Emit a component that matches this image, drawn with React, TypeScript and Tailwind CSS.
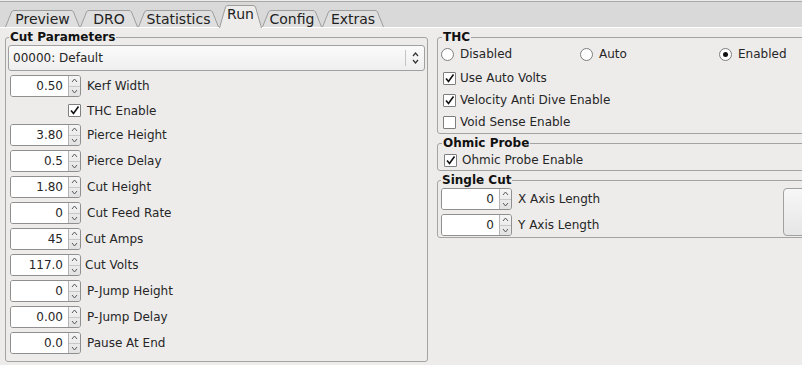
import clsx from "clsx";

// tab strip: bottom widths in px, each tab abuts the next at its bottom corner
const tabs = [
  { label: "Preview", w: 75, cls: "w-[75px]" },
  { label: "DRO", w: 58, cls: "w-[58px]" },
  { label: "Statistics", w: 81, cls: "w-[81px]" },
  { label: "Run", w: 43, cls: "w-[43px]", active: true },
  { label: "Config", w: 60, cls: "w-[60px]" },
  { label: "Extras", w: 62, cls: "w-[62px]" },
];

const cutParams = [
  { value: "3.80", label: "Pierce Height" },
  { value: "0.5", label: "Pierce Delay" },
  { value: "1.80", label: "Cut Height" },
  { value: "0", label: "Cut Feed Rate" },
  { value: "45", label: "Cut Amps", tight: true },
  { value: "117.0", label: "Cut Volts", tight: true },
  { value: "0", label: "P-Jump Height" },
  { value: "0.00", label: "P-Jump Delay" },
  { value: "0.0", label: "Pause At End" },
];

function Tab({ label, w, cls, active }: { label: string; w: number; cls: string; active?: boolean }) {
  const h = active ? 23 : 17;
  const d = `M0.5 ${h} L6.5 2 Q7.3 0.5 9 0.5 L${w - 9} 0.5 Q${w - 7.3} 0.5 ${w - 6.5} 2 L${w - 0.5} ${h}`;
  return (
    <div
      className={clsx(
        "relative flex justify-center",
        cls,
        active ? "h-[23px] -mb-px z-10 pt-[1px]" : "h-[17px] items-center pt-[1px]"
      )}
    >
      <svg className="absolute inset-0" width={w} height={h}>
        <path d={d} fill={active ? "#edeceb" : "#dfdfdf"} stroke="#9d9d9d" strokeWidth="1" />
      </svg>
      <span className="relative text-[14px] leading-[17px] text-[#222]">{label}</span>
    </div>
  );
}

function Spin({ value }: { value: string }) {
  return (
    <div className="flex h-[22px] w-[71px] shrink-0 rounded-[3px] border border-[#8f8f8f] overflow-hidden">
      <div className="flex-1 bg-white text-right pr-[5px] leading-[20px]">{value}</div>
      <div className="flex w-[12px] flex-col border-l border-[#b4b4b4] bg-gradient-to-b from-[#f5f5f5] to-[#e2e2e2]">
        <div className="flex flex-1 items-center justify-center border-b border-[#c8c8c8]">
          <svg width="7" height="5">
            <path d="M1 4 L3.5 1 L6 4" fill="none" stroke="#5a5a5a" strokeWidth="1" />
          </svg>
        </div>
        <div className="flex flex-1 items-center justify-center">
          <svg width="7" height="5">
            <path d="M1 1 L3.5 4 L6 1" fill="none" stroke="#5a5a5a" strokeWidth="1" />
          </svg>
        </div>
      </div>
    </div>
  );
}

function Check({ checked }: { checked?: boolean }) {
  return (
    <div className="flex h-[13px] w-[13px] shrink-0 items-center justify-center rounded-[1px] border border-[#7e7e7e] bg-white">
      {checked && (
        <svg width="11" height="11">
          <path d="M2 5.5 L4.5 8.5 L9.5 1.5" fill="none" stroke="#111" strokeWidth="1.6" />
        </svg>
      )}
    </div>
  );
}

function Radio({ checked }: { checked?: boolean }) {
  return (
    <div className="flex h-[13px] w-[13px] shrink-0 items-center justify-center rounded-full border border-[#7e7e7e] bg-white">
      {checked && <div className="h-[5px] w-[5px] rounded-full bg-[#111]" />}
    </div>
  );
}

function Frame({ title, className, children }: { title: string; className?: string; children: React.ReactNode }) {
  return (
    <fieldset className={clsx("rounded-[3px] border border-[#a3a3a3] px-[2px]", className)}>
      <legend className="ml-[1px] px-[1px] text-[12px] font-bold leading-[14px] text-[#111]">{title}</legend>
      {children}
    </fieldset>
  );
}

export default function App() {
  return (
    <div className="h-[365px] w-[802px] overflow-hidden bg-[#edeceb] font-['DejaVu_Sans',sans-serif] text-[12px] text-[#262626]">
      {/* notebook tabs */}
      <div className="mt-px flex h-[27px] items-end border-t border-b border-t-[#a9a9a9] border-b-white bg-[#d9d9d9] pl-[5px]">
        {tabs.map((t) => (
          <Tab key={t.label} {...t} />
        ))}
      </div>

      <div className="flex items-start gap-[9px] pl-[5px] pt-[2px]">
        {/* cut parameters */}
        <Frame title="Cut Parameters" className="h-[332px] w-[423px] shrink-0 pt-[1px]">
          <div className="flex h-[26px] items-center rounded-[3px] border border-[#a0a0a0] bg-gradient-to-b from-[#fbfbfb] to-[#efefef]">
            <span className="flex-1 pl-[4px]">00000: Default</span>
            <div className="h-[16px] w-px bg-[#c4c4c4]" />
            <div className="flex w-[18px] flex-col items-center gap-[2px]">
              <svg width="7" height="5">
                <path d="M1 4 L3.5 1 L6 4" fill="none" stroke="#333" strokeWidth="1.2" />
              </svg>
              <svg width="7" height="5">
                <path d="M1 1 L3.5 4 L6 1" fill="none" stroke="#333" strokeWidth="1.2" />
              </svg>
            </div>
          </div>
          <div className="mt-[4px] flex flex-col gap-[4px] pl-[2px]">
            <div className="flex items-center">
              <Spin value="0.50" />
              <span className="ml-[6px]">Kerf Width</span>
            </div>
            <div className="flex h-[19px] items-center">
              <div className="flex w-[71px] justify-end">
                <Check checked />
              </div>
              <span className="ml-[6px]">THC Enable</span>
            </div>
            {cutParams.map((p) => (
              <div key={p.label} className="flex items-center">
                <Spin value={p.value} />
                <span className={p.tight ? "ml-[4px]" : "ml-[6px]"}>{p.label}</span>
              </div>
            ))}
          </div>
        </Frame>

        <div className="flex w-[430px] shrink-0 flex-col">
          <Frame title="THC" className="pl-[3px]">
            <div className="grid h-[20px] w-[417px] grid-cols-3 items-center">
              <div className="flex items-center gap-[6px]">
                <Radio />
                <span>Disabled</span>
              </div>
              <div className="flex items-center gap-[6px]">
                <Radio />
                <span>Auto</span>
              </div>
              <div className="flex items-center gap-[6px]">
                <Radio checked />
                <span>Enabled</span>
              </div>
            </div>
            <div className="mt-[3px] flex flex-col pl-[2px]">
              {[
                ["Use Auto Volts", true],
                ["Velocity Anti Dive Enable", true],
                ["Void Sense Enable", false],
              ].map(([label, on]) => (
                <div key={label as string} className="flex h-[22px] items-center gap-[4px]">
                  <Check checked={on as boolean} />
                  <span>{label}</span>
                </div>
              ))}
            </div>
          </Frame>

          <Frame title="Ohmic Probe" className="mt-[2px] pl-[3px]">
            <div className="flex h-[20px] items-center gap-[5px] pl-[3px]">
              <Check checked />
              <span>Ohmic Probe Enable</span>
            </div>
          </Frame>

          <Frame title="Single Cut" className="mt-[2px] pb-[1px]">
            <div className="flex items-start pt-[1px]">
              <div className="flex flex-col gap-[4px] pl-[1px]">
                <div className="flex items-center">
                  <Spin value="0" />
                  <span className="ml-[6px]">X Axis Length</span>
                </div>
                <div className="flex items-center">
                  <Spin value="0" />
                  <span className="ml-[6px]">Y Axis Length</span>
                </div>
              </div>
              <div className="ml-auto h-[48px] w-[81px] rounded-[4px] border border-[#a0a0a0] bg-gradient-to-b from-[#f7f7f7] to-[#e6e6e6]" />
            </div>
          </Frame>
        </div>
      </div>
    </div>
  );
}
